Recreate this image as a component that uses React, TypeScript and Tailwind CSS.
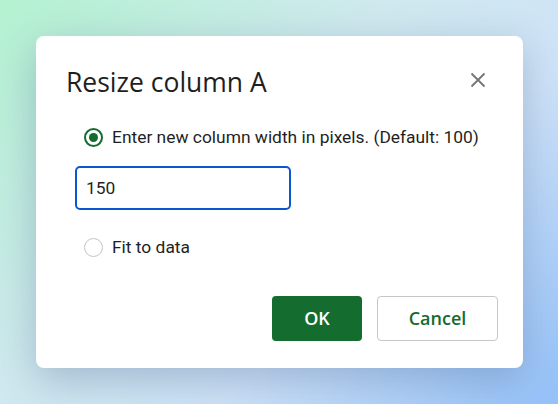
import React from "react";

export default function App() {
  return (
    <div
      className="w-[558px] h-[404px] overflow-hidden pt-[36px] pl-[36px] bg-[linear-gradient(135deg,#b3f2d0_0%,#cfe9ee_40%,#cfe3f8_65%,#94c1f9_100%)]"
      style={{ fontFamily: "Roboto, 'Liberation Sans', sans-serif" }}
    >
      <div className="w-[487px] h-[332px] rounded-[8px] bg-white shadow-[0_12px_40px_rgba(40,70,120,0.28)] flex flex-col">
        <div className="flex items-start justify-between pl-[30px] pr-[37px] pt-[28px]">
          <h1
            className="text-[26.5px] leading-[36px] text-[#1f1f1f]"
            style={{ fontFamily: "'Open Sans', sans-serif" }}
          >
            Resize column A
          </h1>
          <button className="mt-[8px] w-[16px] h-[16px] flex items-center justify-center text-[#747474]">
            <svg width="16" height="16" viewBox="0 0 16 16" fill="none" stroke="currentColor" strokeWidth="1.8">
              <path d="M1.5 1.5L14.5 14.5M14.5 1.5L1.5 14.5" />
            </svg>
          </button>
        </div>
        <div className="flex flex-col pl-[48px] pt-[24px]">
          <label className="flex items-center gap-[9px] h-[26px]">
            <span className="w-[19px] h-[19px] rounded-full border-2 border-[#146c2e] flex items-center justify-center">
              <span className="w-[9px] h-[9px] rounded-full bg-[#146c2e]" />
            </span>
            <span className="text-[17.4px] text-[#1f1f1f]">Enter new column width in pixels. (Default: 100)</span>
          </label>
        </div>
        <div className="pl-[39px] pt-[16px]">
          <div className="w-[216px] h-[44px] rounded-[5px] border-2 border-[#0b57d0] flex items-center pl-[9px]">
            <span className="text-[17.4px] text-[#1f1f1f]">150</span>
          </div>
        </div>
        <div className="pl-[48px] pt-[24px]">
          <label className="flex items-center gap-[9px] h-[26px]">
            <span className="w-[19px] h-[19px] rounded-full border border-[#c4c4c4]" />
            <span className="text-[17.4px] text-[#1f1f1f]">Fit to data</span>
          </label>
        </div>
        <div className="flex justify-end gap-[15px] pr-[25px] mt-auto pb-[27px]">
          <button
            className="w-[90px] h-[45px] rounded-[4px] bg-[#146c2e] text-white text-[18px] font-semibold"
            style={{ fontFamily: "'Open Sans', sans-serif" }}
          >
            OK
          </button>
          <button
            className="w-[121px] h-[45px] rounded-[4px] border border-[#c7c7c7] text-[#146c2e] text-[18px] font-[550]"
            style={{ fontFamily: "'Open Sans', sans-serif" }}
          >
            Cancel
          </button>
        </div>
      </div>
    </div>
  );
}
